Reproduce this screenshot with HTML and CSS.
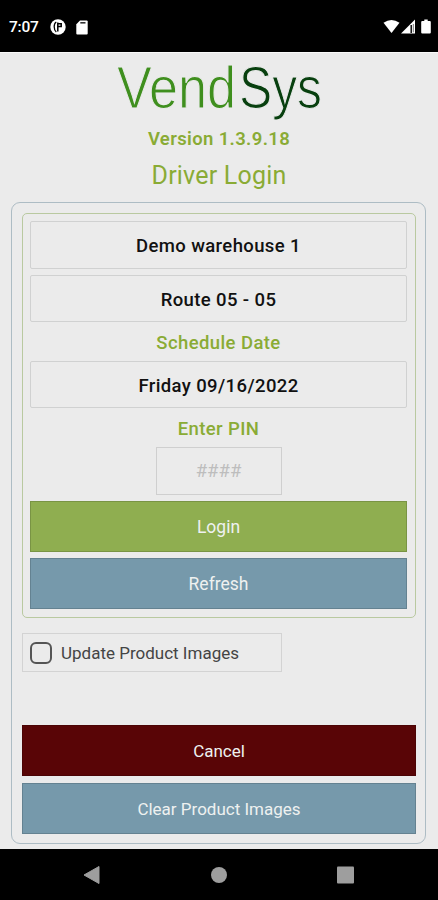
FILE: index.html
```html
<!DOCTYPE html>
<html lang="en">

<head>
  <meta charset="utf-8">
  <meta name="viewport" content="width=device-width, initial-scale=1.0">
  <title>VendSys - Driver Login</title>
  <link rel="stylesheet" href="styles.css">
</head>

<body>
  <div class="status-bar">
    <span class="time">7:07</span>
    <svg class="app-icon" width="16" height="16" viewBox="0 0 16 16">
      <circle cx="8" cy="8" r="7.7" fill="#fff"/>
      <path d="M6.300 3C3.500 4.500 3.500 11 6.300 13" fill="none" stroke="#000" stroke-width="1.300"/>
      <path d="M7.800 3.500v9M8 4.800h3.200v2.800H8" fill="none" stroke="#000" stroke-width="1.500"/>
    </svg>
    <svg class="sd-icon" width="12" height="15" viewBox="0 0 12 15">
      <path d="M4 .5h6.7q1 0 1 1v12q0 1-1 1H1.3q-1 0-1-1V4.2z" fill="#fff"/>
      <path d="M4.3 2.8h5.2" stroke="#333" stroke-width="1.6"/>
    </svg>
    <svg class="signal-icons" width="49" height="16" viewBox="0 0 49 16">
      <path d="M.5 3.8Q8.5-1.7 16.5 3.8L8.5 14z" fill="#fff"/>
      <path d="M18 14.5L32 .5v14z" fill="#fff"/>
      <path d="M28.2 6v8" stroke="#000" stroke-width="1.4"/>
      <path d="M30.3 5v8.3" stroke="#777" stroke-width="1"/>
      <path d="M41.3.5h3.4V2h2.1q1 0 1 1v10.5q0 1-1 1h-7.600q-1 0-1-1V3q0-1 1-1h2.100z" fill="#fff"/>
    </svg>
  </div>

  <div class="app">
    <svg class="logo" width="438" height="68" viewBox="0 0 438 68">
      <text class="logo-vend" x="117" y="54.500" textLength="119" lengthAdjust="spacingAndGlyphs">Vend</text>
      <text class="logo-sys" x="239" y="54.500" textLength="83" lengthAdjust="spacingAndGlyphs">Sys</text>
    </svg>
    <div class="version">Version 1.3.9.18</div>
    <h1>Driver Login</h1>

    <div class="panel">
      <form class="login-box">
        <button type="button" class="field warehouse">Demo warehouse 1</button>
        <button type="button" class="field route">Route 05 - 05</button>
        <label class="schedule">Schedule Date</label>
        <button type="button" class="field date">Friday 09/16/2022</button>
        <label class="pin-label" for="pin">Enter PIN</label>
        <input id="pin" class="pin" type="text" placeholder="####">
        <button type="button" class="btn green">Login</button>
        <button type="button" class="btn blue">Refresh</button>
      </form>

      <label class="update-images">
        <input type="checkbox">
        <span>Update Product Images</span>
      </label>

      <div class="actions">
        <button type="button" class="btn red">Cancel</button>
        <button type="button" class="btn blue clear">Clear Product Images</button>
      </div>
    </div>
  </div>

  <div class="nav-bar">
    <svg width="438" height="50" viewBox="0 0 438 50">
      <path d="M84 26L99 17.500v17z" fill="#9e9e9e" stroke="#9e9e9e" stroke-linejoin="round"/>
      <circle cx="219" cy="26" r="8" fill="#9e9e9e"/>
      <rect x="337" y="17.500" width="17" height="17" rx="1" fill="#9e9e9e"/>
    </svg>
  </div>
</body>

</html>
```

FILE: styles.css
```css
* {
  font-family: Roboto, "Liberation Sans", sans-serif;
  margin: 0;
  padding: 0;
  box-sizing: border-box;
}

body {
  display: flex;
  flex-direction: column;
  width: 438px;
  height: 900px;
  background: #ebebeb;
  overflow: hidden;
}

svg {
  display: block;
}

/* Phone status bar */
.status-bar {
  display: flex;
  align-items: center;
  height: 52px;
  padding: 2px 6px 0 9px;
  background: #000;
}

.time {
  width: 41px;
  color: #fff;
  font-size: 15.5px;
  font-weight: 500;
  letter-spacing: -0.2px;
}

.sd-icon {
  margin-left: 10px;
}

.signal-icons {
  margin-left: auto;
}

/* Title area */
.app {
  display: flex;
  flex-direction: column;
  height: 797px;
  border-top: 1px solid #fafafa;
  text-align: center;
}

.logo {
  height: 68px;
  overflow: visible;
  font-size: 59px;
}

/* Background coloured outline thins the letters */
.logo text {
  font-family: "Liberation Sans", sans-serif;
  stroke: #ebebeb;
  stroke-width: 1.1px;
}

.logo-vend {
  fill: #3f8f1e;
}

.logo-sys {
  fill: #08400f;
}

.version {
  height: 36px;
  line-height: 36px;
  color: #8aab35;
  font-size: 18.5px;
  font-weight: 600;
  letter-spacing: 0.35px;
}

h1 {
  height: 35px;
  line-height: 37px;
  color: #8aab35;
  font-size: 25px;
  font-weight: 400;
  letter-spacing: 0.2px;
}

/* Panels */
.panel {
  display: flex;
  flex-direction: column;
  width: 415px;
  height: 642px;
  margin: 10px 0 0 11px;
  padding: 10px 9px 0 10px;
  border: 1px solid #adbcc4;
  border-radius: 9px;
}

.login-box {
  display: flex;
  flex-direction: column;
  height: 405px;
  padding: 7px 8px 0 7px;
  border: 1px solid #b9c9a0;
  border-radius: 5px;
}

.field {
  height: 48px;
  padding-top: 2px;
  background: transparent;
  border: 1px solid #d0d1d1;
  border-radius: 2px;
  color: #111;
  font-size: 18.5px;
  font-weight: 500;
  letter-spacing: 0.38px;
}

.route {
  height: 47px;
  margin-top: 6px;
}

.date {
  height: 47px;
}

.login-box label {
  height: 39px;
  line-height: 42px;
  color: #8aab35;
  font-size: 18.5px;
  font-weight: 500;
  letter-spacing: 0.4px;
}

.pin {
  align-self: center;
  width: 126px;
  height: 48px;
  background: transparent;
  border: 1px solid #cfcfcf;
  font-size: 18.5px;
  text-align: center;
}

.pin::placeholder {
  color: #bdbdbd;
}

.btn {
  height: 51px;
  padding-top: 1px;
  border: 1px solid rgba(0, 0, 0, 0.15);
  color: #eef1f0;
  font-size: 17px;
}

.btn + .btn {
  margin-top: 6px;
}

.green {
  margin-top: 6px;
  background: #8fae50;
}

.blue {
  background: #7699ab;
}

.red {
  background: #590506;
}

.green,
.green + .blue {
  font-size: 17.5px;
}

.update-images {
  display: flex;
  align-items: center;
  width: 260px;
  height: 39px;
  margin-top: 15px;
  padding-left: 7px;
  border: 1px solid #d3d3d3;
  color: #444;
  font-size: 17px;
}

.update-images input {
  appearance: none;
  width: 22px;
  height: 22px;
  margin-right: 9px;
  border: 2px solid #555;
  border-radius: 6px;
}

.actions {
  display: flex;
  flex-direction: column;
  margin-top: 53px;
}

.actions .clear {
  margin-top: 7px;
}

/* Phone navigation bar */
.nav-bar {
  height: 51px;
  background: #000;
}
```
